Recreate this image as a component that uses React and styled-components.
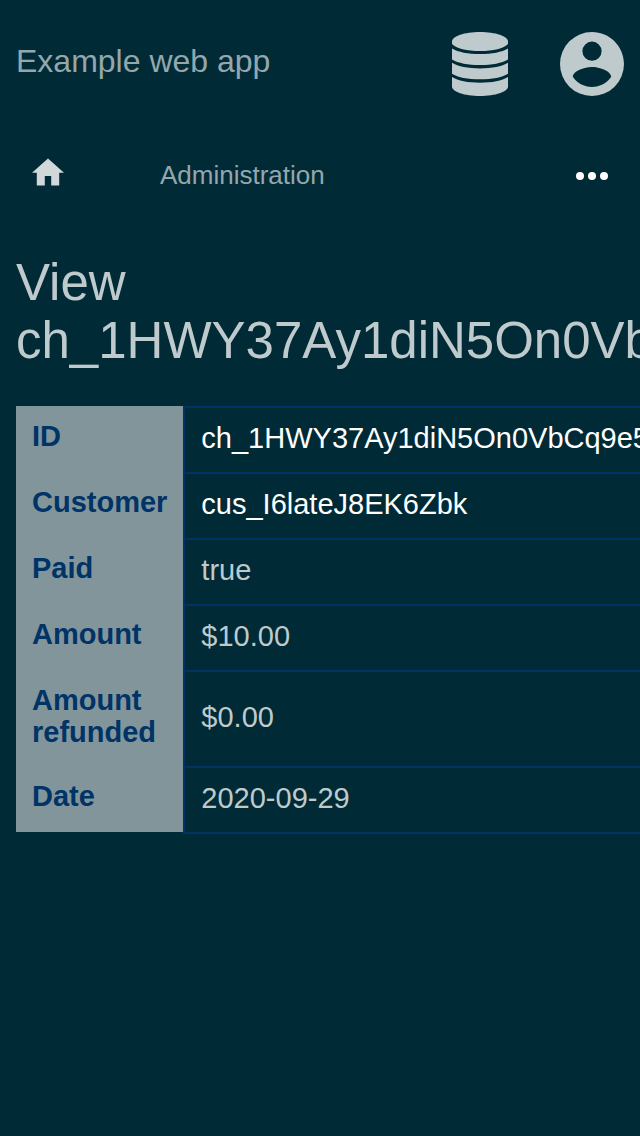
import React from "react";
import styled, { createGlobalStyle } from "styled-components";

const GlobalStyle = createGlobalStyle`
  * { box-sizing: border-box; }
  body {
    margin: 0;
    background: #002b36;
    color: #bfcacd;
    font-family: "Liberation Sans", Arial, sans-serif;
    overflow-x: hidden;
  }
`;
const Header = styled.header`
  display: flex;
  align-items: center;
  justify-content: space-between;
  padding: 32px 16px;
`;
const Brand = styled.a`
  color: #93a7ac;
  font-size: 32px;
  line-height: 36px;
  padding-bottom: 6px;
  text-decoration: none;
`;
const Actions = styled.div`
  display: flex;
  gap: 48px;
`;
const IconButton = styled.button`
  display: flex;
  align-items: center;
  justify-content: center;
  width: 64px;
  height: 64px;
  padding: 0;
  border: 0;
  background: none;
  color: #bfcacd;
`;
const Nav = styled.nav`
  display: flex;
  align-items: center;
  height: 64px;
  margin-top: 16px;
  padding: 0 32px;
`;
const HomeLink = styled.a`
  display: flex;
  width: 128px;
  padding-bottom: 8px;
  color: #d0d8da;
`;
const NavLink = styled.a`
  flex: 1;
  padding-bottom: 2px;
  color: #93a7ac;
  font-size: 26px;
  line-height: 30px;
  text-decoration: none;
`;
const MoreButton = styled.button`
  display: flex;
  gap: 4px;
  padding: 0;
  border: 0;
  background: none;
`;
const Dot = styled.span`
  width: 8px;
  height: 8px;
  border-radius: 50%;
  background: #fff;
`;
const Main = styled.main`
  padding: 46px 16px 32px;
`;
const Title = styled.h1`
  margin: 0 0 36px;
  font-size: 51px;
  line-height: 58px;
  font-weight: 400;
`;
const Table = styled.table`
  border-collapse: separate;
  border-spacing: 0;
  font-size: 29px;
  line-height: 32px;
`;
const Label = styled.th`
  width: 168px;
  padding: 14px 16px 18px;
  background: #82959b;
  color: #003366;
  text-align: left;
  vertical-align: top;
`;
const Value = styled.td`
  padding: 14px 16px 18px;
  border: 2px solid #003366;
  border-bottom: 0;
  box-shadow: 0 2px 0 #003366;
  white-space: nowrap;
`;
const ValueLink = styled.a`
  color: #fff;
  text-decoration: none;
`;

const DatabaseIcon = () => (
  <svg width="56" height="64" viewBox="0 0 56 64" fill="currentColor" aria-hidden="true">
    <path d="M28 0C43.500 0 56 4.200 56 9.500V12C52 16.500 41 19 28 19S4 16.500 0 12V9.500C0 4.200 12.500 0 28 0Z" />
    <path d="M0 16.500C6 20.200 16 22 28 22S50 20.200 56 16.500V27.500C50 31.200 40 33 28 33S6 31.200 0 27.500Z" />
    <path d="M0 30.800C6 34.500 16 36.400 28 36.400S50 34.500 56 30.800V41.700C50 45.400 40 47.300 28 47.300S6 45.400 0 41.700Z" />
    <path d="M0 45C6 48.800 16 50.700 28 50.700S50 48.800 56 45V54.500C56 59.800 43.500 64 28 64S0 59.800 0 54.500Z" />
  </svg>
);

const AccountIcon = () => (
  <svg width="64" height="64" viewBox="2 2 20 20" fill="currentColor" aria-hidden="true">
    <path d="M12 19.200C9.500 19.200 7.290 17.920 6 16C6.030 14 10 12.900 12 12.900S17.970 14 18 16C16.710 17.920 14.500 19.200 12 19.200M12 5A3 3 0 0 1 15 8A3 3 0 0 1 12 11A3 3 0 0 1 9 8A3 3 0 0 1 12 5M12 2A10 10 0 0 0 2 12A10 10 0 0 0 12 22A10 10 0 0 0 22 12C22 6.470 17.500 2 12 2Z" />
  </svg>
);

const HomeIcon = () => (
  <svg width="32" height="28" viewBox="2 3 20 17" fill="currentColor" aria-hidden="true">
    <path d="M10 20V14H14V20H19V12H22L12 3L2 12H5V20H10Z" />
  </svg>
);

const rows = [
  { label: "ID", value: "ch_1HWY37Ay1diN5On0VbCq9e5L", link: true },
  { label: "Customer", value: "cus_I6lateJ8EK6Zbk", link: true },
  { label: "Paid", value: "true" },
  { label: "Amount", value: "$10.00" },
  { label: "Amount refunded", value: "$0.00" },
  { label: "Date", value: "2020-09-29" },
];

export default function App() {
  return (
    <>
      <GlobalStyle />
      <Header>
        <Brand href="#">Example web app</Brand>
        <Actions>
          <IconButton aria-label="Data"><DatabaseIcon /></IconButton>
          <IconButton aria-label="Account"><AccountIcon /></IconButton>
        </Actions>
      </Header>
      <Nav>
        <HomeLink href="#" aria-label="Home"><HomeIcon /></HomeLink>
        <NavLink href="#">Administration</NavLink>
        <MoreButton aria-label="More"><Dot /><Dot /><Dot /></MoreButton>
      </Nav>
      <Main>
        <Title>View ch_1HWY37Ay1diN5On0VbCq9e5L</Title>
        <Table>
          <tbody>
            {rows.map((row) => (
              <tr key={row.label}>
                <Label scope="row">{row.label}</Label>
                <Value>{row.link ? <ValueLink href="#">{row.value}</ValueLink> : row.value}</Value>
              </tr>
            ))}
          </tbody>
        </Table>
      </Main>
    </>
  );
}
